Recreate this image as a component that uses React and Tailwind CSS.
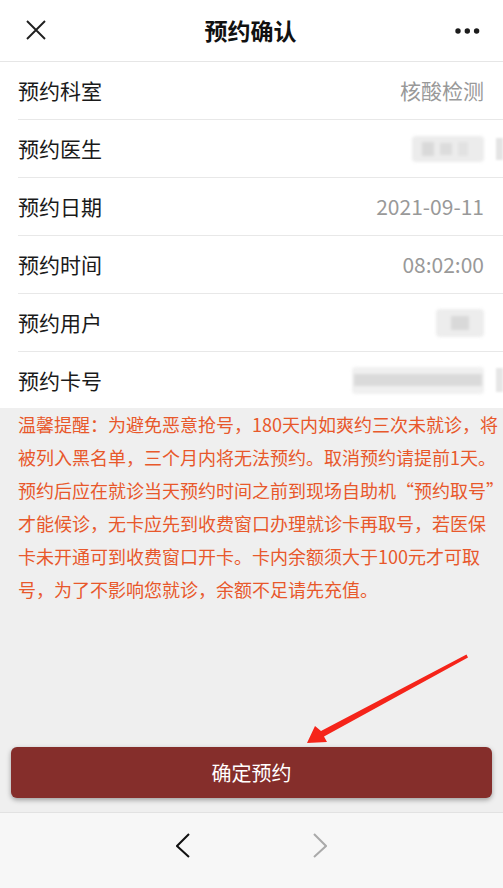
const rows = [
    { label: "预约科室", value: "核酸检测" },
    { label: "预约医生", blur: "doctor" },
    { label: "预约日期", value: "2021-09-11" },
    { label: "预约时间", value: "08:02:00" },
    { label: "预约用户", blur: "user" },
    { label: "预约卡号", blur: "card" },
];

const notice = [
    "温馨提醒：为避免恶意抢号，180天内如爽约三次未就诊，将",
    "被列入黑名单，三个月内将无法预约。取消预约请提前1天。",
    "预约后应在就诊当天预约时间之前到现场自助机“预约取号”",
    "才能候诊，无卡应先到收费窗口办理就诊卡再取号，若医保",
    "卡未开通可到收费窗口开卡。卡内余额须大于100元才可取",
    "号，为了不影响您就诊，余额不足请先充值。",
];

function Blurred({ kind }) {
    if (kind === "doctor") {
        return (
            <div className="flex items-center">
                <div className="flex h-[26px] w-[72px] items-center gap-[6px] rounded-[4px] bg-[#ececec] px-[10px] blur-[1.5px]">
                    <div className="h-[14px] w-[12px] bg-[#d9d9d9]" />
                    <div className="h-[12px] w-[12px] bg-[#dcdcdc]" />
                    <div className="h-[14px] w-[10px] bg-[#e2e2e2]" />
                </div>
                <div className="ml-[12px] mr-[-19px] h-[22px] w-[7px] bg-[#e4e4e4] blur-[1px]" />
            </div>
        );
    }
    if (kind === "user") {
        return (
            <div className="flex h-[28px] w-[48px] items-center justify-center rounded-[4px] bg-[#ededed] blur-[1.5px]">
                <div className="h-[14px] w-[18px] bg-[#d9d9d9]" />
            </div>
        );
    }
    return (
        <div className="flex items-center">
            <div className="flex h-[27px] w-[132px] items-center rounded-[4px] bg-[#f0f0f0] px-[2px] blur-[1.5px]">
                <div className="h-[12px] w-full bg-[#dadada]" />
            </div>
            <div className="ml-[12px] mr-[-19px] h-[24px] w-[7px] bg-[#e6e6e6] blur-[1px]" />
        </div>
    );
}

export default function App() {
    return (
        <div
            className="relative flex h-[888px] w-[503px] flex-col overflow-hidden bg-[#efefef]"
            style={{ fontFamily: '"Noto Sans CJK SC", "Noto Sans", sans-serif' }}
        >
            {/* header */}
            <div className="flex h-[62px] shrink-0 items-center justify-between border-b border-[#e6e6e6] bg-white pl-[26px] pr-[23px]">
                <svg width="20" height="20" viewBox="0 0 20 20" className="mt-[-2px]">
                    <path d="M1 1 L19 19 M19 1 L1 19" stroke="#1f1f1f" strokeWidth="1.9" fill="none" />
                </svg>
                <h1 className="text-[23px] font-semibold leading-none text-[#111]">预约确认</h1>
                <svg width="25" height="8" viewBox="0 0 25 8">
                    <circle cx="3" cy="4" r="2.7" fill="#1c1c1c" />
                    <circle cx="12.3" cy="4" r="2.7" fill="#1c1c1c" />
                    <circle cx="21.6" cy="4" r="2.7" fill="#1c1c1c" />
                </svg>
            </div>

            {/* info rows */}
            <div className="shrink-0 bg-white">
                {rows.map((row, i) => (
                    <div key={row.label} className={i < rows.length - 1 ? "ml-[18px] border-b border-[#e8e8e8]" : "ml-[18px]"}>
                        <div className={`flex items-center justify-between pr-[19px] ${i < rows.length - 1 ? "h-[57px]" : "h-[56px]"}`}>
                            <span className="text-[21px] leading-none text-[#1a1a1a]">{row.label}</span>
                            {row.value ? (
                                <span className="text-[21px] leading-none text-[#999]">{row.value}</span>
                            ) : (
                                <Blurred kind={row.blur} />
                            )}
                        </div>
                    </div>
                ))}
            </div>

            {/* notice */}
            <div className="px-[18px] text-[18px] leading-[33px] text-[#e8582b]">
                {notice.map((line) => (
                    <div key={line} className="whitespace-nowrap">{line}</div>
                ))}
            </div>

            <div className="flex flex-1 flex-col justify-end px-[11px] pb-[14px]">
                <button className="flex h-[51px] w-full items-center justify-center rounded-[6px] bg-[#852e2b] text-[20px] text-white shadow-[0_2px_5px_rgba(0,0,0,0.35)]">
                    确定预约
                </button>
            </div>

            {/* bottom nav */}
            <div className="flex h-[76px] shrink-0 items-start justify-center gap-[123px] border-t border-[#e2e2e2] bg-[#f7f7f7] pt-[20px]">
                <svg width="14" height="26" viewBox="0 0 14 26">
                    <polyline points="13,1 1,13 13,24" fill="none" stroke="#111" strokeWidth="2" />
                </svg>
                <svg width="14" height="26" viewBox="0 0 14 26">
                    <polyline points="1,1 13,13 1,24" fill="none" stroke="#aaa" strokeWidth="2" />
                </svg>
            </div>

            {/* annotation arrow */}
            <svg className="pointer-events-none absolute left-0 top-0" width="503" height="888" viewBox="0 0 503 888">
                <polygon
                    points="466.5,654.6 321,731 315,726 307,743 327,742 324,736.5 468,657.4"
                    fill="#f5241a"
                />
            </svg>
        </div>
    );
}
